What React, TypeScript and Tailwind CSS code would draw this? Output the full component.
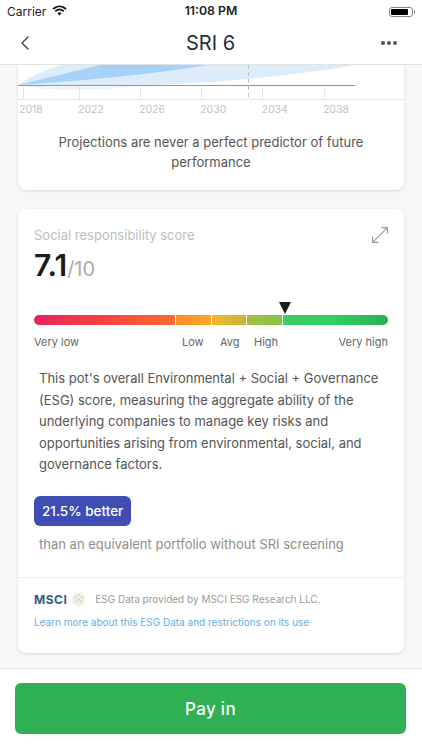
import { ChevronLeft } from 'lucide-react'

const years = ['2018', '2022', '2026', '2030', '2034', '2038']

function StatusBar() {
  return (
    <div className="flex h-[22px] items-center justify-between px-[7px] pt-[1px] text-[12px] text-[#222]">
      <div className="flex w-[120px] items-center gap-[6px]">
        <span>Carrier</span>
        <svg width="15" height="11" viewBox="0 0 15 11" fill="none" className="-mt-[2px]">
          <path d="M1 4 C5 0.4 10 0.4 14 4" stroke="#111" strokeWidth="1.8" />
          <path d="M3.3 6.2 C6 3.9 9 3.9 11.7 6.2" stroke="#111" strokeWidth="1.8" />
          <path d="M5.4 8.2 L7.5 10.5 L9.6 8.2 C8.3 7 6.7 7 5.4 8.2 Z" fill="#111" />
        </svg>
      </div>
      <span className="text-[12.3px] font-semibold">11:08 PM</span>
      <div className="flex w-[120px] items-center justify-end">
        <div className="flex h-[10px] w-[24px] items-center rounded-[3px] border border-[#888] p-[1px]">
          <div className="h-full w-[17px] rounded-[1px] bg-black" />
        </div>
        <div className="ml-[1px] h-[4px] w-[1px] bg-[#888]" />
      </div>
    </div>
  )
}

function Header() {
  return (
    <div className="z-10 flex h-[43px] items-center justify-between border-b border-[#e2e2e2] bg-white pl-[13px] pr-[25px]">
      <ChevronLeft className="h-[24px] w-[24px] text-[#33424f]" strokeWidth={1.4} />
      <h1 className="ml-[11px] text-[20px] text-[#22303c]">SRI 6</h1>
      <div className="flex w-[24px] items-center justify-end gap-[2px]">
        <span className="h-[4px] w-[4px] rounded-full bg-[#4a5560]" />
        <span className="h-[4px] w-[4px] rounded-full bg-[#4a5560]" />
        <span className="h-[4px] w-[4px] rounded-full bg-[#4a5560]" />
      </div>
    </div>
  )
}

function ProjectionChart() {
  return (
    <svg width="385" height="34" viewBox="0 0 385 34" className="block">
      <path d="M0 20 C15 10 28 5 42 0 L337 0 C240 17 120 24 0 20 Z" fill="#dcecfb" />
      <path d="M0 20 C30 26 70 26 120 21 C80 23 30 22 0 20 Z" fill="#e8f2fc" />
      <path d="M0 20 L82 0 L190 0 C130 10 60 16 0 20 Z" fill="#a5d2f6" />
      <rect x="0" y="20" width="337" height="1" fill="#4fa6ec" />
      <line x1="230.5" y1="0" x2="230.5" y2="34" stroke="#b8bec4" strokeWidth="1" strokeDasharray="4 3" />
      {[6, 62, 123, 184, 245, 307].map((x) => (
        <line key={x} x1={x - 0.5} y1="22" x2={x - 0.5} y2="34" stroke="#e4e6e8" strokeWidth="1" />
      ))}
    </svg>
  )
}

function ScoreBar() {
  return (
    <div className="relative mt-[31px]">
      <div className="absolute left-[245px] top-[-13px] h-0 w-0 border-x-[6px] border-t-[12px] border-x-transparent border-t-[#1a1a1a]" />
      <div className="flex h-[10px] w-[354px] gap-px overflow-hidden rounded-full">
        <div className="w-[141px] bg-gradient-to-r from-[#e8205f] via-[#f5423f] to-[#fa6a31]" />
        <div className="w-[34.5px] bg-gradient-to-r from-[#fb8a2b] to-[#fdaa26]" />
        <div className="w-[34.5px] bg-gradient-to-r from-[#f2b82a] to-[#c6b53a]" />
        <div className="w-[34.5px] bg-gradient-to-r from-[#a8bb40] to-[#7fc64c]" />
        <div className="flex-1 bg-gradient-to-r from-[#3fcd5e] via-[#2ecf62] to-[#2fae55]" />
      </div>
      <div className="relative mt-[9px] h-[16px] text-[11px] leading-[16px] text-[#666]">
        <span className="absolute left-0">Very low</span>
        <span className="absolute left-[148px]">Low</span>
        <span className="absolute left-[186px]">Avg</span>
        <span className="absolute left-[220px]">High</span>
        <span className="absolute right-0">Very high</span>
      </div>
    </div>
  )
}

export default function App() {
  return (
    <div className="flex h-[750px] w-[422px] flex-col overflow-hidden bg-white font-['Inter',sans-serif]">
      <StatusBar />
      <Header />

      <main className="flex min-h-0 flex-1 flex-col gap-[19px] bg-[#f7f7f7] px-[18px]">
        <section className="rounded-b-[8px] bg-white shadow-[0_1px_3px_rgba(0,0,0,0.12)]">
          <ProjectionChart />
          <div className="border-t border-[#e4e6e8]" />
          <div className="flex w-[331px] justify-between pl-[1px] text-[10.5px] leading-[20px] text-[#c4c4c4]">
            {years.map((y) => (
              <span key={y}>{y}</span>
            ))}
          </div>
          <p className="px-[30px] pb-[18px] pt-[12px] text-center text-[13px] leading-[20px] text-[#555]">
            Projections are never a perfect predictor of future performance
          </p>
        </section>

        <section className="rounded-[8px] bg-white shadow-[0_1px_3px_rgba(0,0,0,0.12)]">
          <div className="px-[16px] pb-[23px] pt-[17px]">
            <div className="flex items-start justify-between">
              <span className="text-[13px] leading-[18px] text-[#bdbdbd]">Social responsibility score</span>
              <svg width="16" height="16" viewBox="0 0 16 16" fill="none" stroke="#9a9a9a" strokeWidth="1.2" className="mt-[1px]">
                <path d="M0.6 15.4 L15.4 0.6 M9.5 0.6 H15.4 V6.5 M0.6 9.5 V15.4 H6.5" />
              </svg>
            </div>
            <div className="mt-[4px] flex items-baseline text-[#1c1c1c]">
              <span className="text-[30px] font-semibold leading-[34px]">7.1</span>
              <span className="text-[20px] text-[#ababab]">/10</span>
            </div>
            <ScoreBar />
            <p className="mt-[18px] px-[5px] text-[13px] leading-[21.6px] text-[#555]">
              This pot's overall Environmental + Social + Governance (ESG) score, measuring the aggregate ability of the underlying companies to manage key risks and opportunities arising from environmental, social, and governance factors.
            </p>
            <div className="mt-[20px] inline-block rounded-[6px] bg-[#3f4db5] px-[8px] py-[6px] text-[13.5px] font-medium leading-[18px] text-white">
              21.5% better
            </div>
            <p className="mt-[8px] px-[5px] text-[13px] leading-[20px] text-[#8e8e8e]">
              than an equivalent portfolio without SRI screening
            </p>
          </div>
          <div className="border-t border-[#ececec] px-[16px] pb-[24px] pt-[14px]">
            <div className="flex items-center">
              <span className="text-[12px] font-bold leading-[16px] tracking-[0.5px] text-[#2f5f80]">MSCI</span>
              <svg width="15" height="15" viewBox="0 0 14 14" className="ml-[4px]">
                <circle cx="7" cy="7" r="6.5" fill="#f4f1ea" />
                <circle cx="4" cy="5" r="1" fill="#d9c9a8" />
                <circle cx="7" cy="3" r="1" fill="#c9d4dc" />
                <circle cx="10" cy="5" r="1" fill="#e0c9a0" />
                <circle cx="5" cy="9" r="1" fill="#c9d4dc" />
                <circle cx="9" cy="9" r="1" fill="#d9c9a8" />
                <circle cx="7" cy="7" r="1" fill="#bcc8d2" />
              </svg>
              <span className="ml-[9px] text-[10px] text-[#9a9a9a]">ESG Data provided by MSCI ESG Research LLC.</span>
            </div>
            <a className="mt-[7px] block text-[10px] leading-[14px] text-[#62aee6]">
              Learn more about this ESG Data and restrictions on its use
            </a>
          </div>
        </section>
      </main>

      <footer className="flex h-[82px] shrink-0 flex-col border-t border-[#dedede] bg-white px-[15px] pt-[14px]">
        <button className="h-[51px] w-[391px] rounded-[6px] bg-[#30b055] pt-[2px] text-[17px] font-medium tracking-[0.3px] text-white">
          Pay in
        </button>
      </footer>
    </div>
  )
}
